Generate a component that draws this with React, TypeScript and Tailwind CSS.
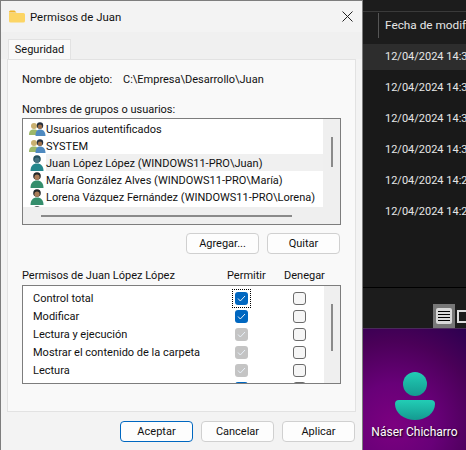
const font = { fontFamily: 'Roboto, "Liberation Sans", sans-serif' };

const users = [
  { name: 'Usuarios autentificados', group: true },
  { name: 'SYSTEM', group: true },
  { name: 'Juan López López (WINDOWS11-PRO\\Juan)', selected: true },
  { name: 'María González Alves (WINDOWS11-PRO\\María)' },
  { name: 'Lorena Vázquez Fernández (WINDOWS11-PRO\\Lorena)' },
  { name: '' },
];

const permissions = [
  { name: 'Control total', state: 'on', focus: true },
  { name: 'Modificar', state: 'on' },
  { name: 'Lectura y ejecución', state: 'off' },
  { name: 'Mostrar el contenido de la carpeta', state: 'off' },
  { name: 'Lectura', state: 'off' },
  { name: '', state: 'on' },
];

const dates = ['14:3', '14:3', '14:3', '14:3', '14:2', '14:2'];

function FolderIcon() {
  return (
    <svg width="16" height="13" viewBox="0 0 16 13">
      <path d="M0 2a1.500 1.500 0 0 1 1.500-1.500h4L7.500 2.500H0z" fill="#f0b429" />
      <path d="M0 3h14.500a1.500 1.500 0 0 1 1.500 1.500V11a1.500 1.500 0 0 1-1.500 1.500h-13A1.500 1.500 0 0 1 0 11z" fill="#fcd565" />
    </svg>
  );
}

function GroupIcon() {
  return (
    <svg width="17" height="14" viewBox="0 0 17 14">
      <circle cx="5" cy="4" r="3" fill="#c9b070" />
      <path d="M0 13c0-4 1.500-5.500 5-5.500s4.500 1.500 4.500 5.500z" fill="#9db86a" />
      <circle cx="11" cy="3.500" r="3.200" fill="#26303e" />
      <circle cx="11" cy="4.700" r="2.200" fill="#9c6f4a" />
      <path d="M6.500 14c0-4.500 1.500-6.500 4.500-6.500s5.500 2 5.500 6.500z" fill="#4f8ac0" />
    </svg>
  );
}

function UserIcon({ dim }: { dim?: boolean }) {
  return (
    <svg width="14" height="16" viewBox="0 0 14 16">
      <circle cx="7" cy="4" r="3.800" fill={dim ? '#24505c' : '#23282a'} />
      <circle cx="7" cy="5.200" r="2.600" fill={dim ? '#44727f' : '#a97c58'} />
      <path d="M.5 16c0-5 2.500-7.500 6.500-7.500s6.500 2.500 6.500 7.500z" fill={dim ? '#24878c' : '#358e6c'} />
    </svg>
  );
}

function Check({ state }: { state: string }) {
  if (state === 'none') {
    return <span className="block h-[13px] w-[13px] rounded-[3px] border-[1.5px] border-[#6b6b6b] bg-[#f6f6f6]" />;
  }
  return (
    <span className={`flex h-[13px] w-[13px] items-center justify-center rounded-[3px] ${state === 'on' ? 'bg-[#0067c0]' : 'bg-[#c4c4c4]'}`}>
      <svg width="9" height="7" viewBox="0 0 9 7" fill="none" stroke="#e8f0f8" strokeWidth="1">
        <path d="M1 3.500 3.300 6 8 1" />
      </svg>
    </span>
  );
}

function Button({ label, primary }: { label: string; primary?: boolean }) {
  return (
    <button className={`h-[21px] w-[73px] rounded-[4px] border bg-[#fdfdfd] text-[11px] leading-none text-[#111] ${primary ? 'border-[#0067c0]' : 'border-[#d0d0d0]'}`}>
      {label}
    </button>
  );
}

export default function App() {
  return (
    <div className="flex h-[450px] w-[466px] overflow-hidden bg-[#1c1c1c]" style={font}>
      {/* Dialog */}
      <div className="flex h-[450px] w-[363px] shrink-0 flex-col border-x border-t border-[#7d7d7d] bg-[#f3f3f3] text-[11px] text-[#111]">
        <div className="flex h-[31px] shrink-0 items-center pl-[8px] pr-[9px]">
          <FolderIcon />
          <span className="ml-[5px] mt-[2px] text-[11.400px]">Permisos de Juan</span>
          <svg className="ml-auto" width="11" height="11" viewBox="0 0 11 11" stroke="#222" strokeWidth="1">
            <path d="M.5.500l10 10M10.500.500l-10 10" />
          </svg>
        </div>

        <div className="flex h-[27px] shrink-0 items-end bg-[#f0f0f0] pl-[7px]">
          <div className="mb-[-1px] flex h-[21px] w-[63px] items-center justify-center border border-b-0 border-[#e2e2e2] bg-[#f9f9f9] pt-[1px]">
            Seguridad
          </div>
        </div>

        <div className="mx-[6px] flex h-[353px] shrink-0 flex-col border border-[#e2e2e2] bg-[#f9f9f9] pl-[14px] pr-[12px]">
          <div className="mt-[12px] flex h-[17px] items-center">
            <span className="w-[101px]">Nombre de objeto:</span>
            <span>C:\Empresa\Desarrollo\Juan</span>
          </div>
          <div className="mt-[14px] flex h-[15px] items-center">Nombres de grupos o usuarios:</div>

          {/* Users list */}
          <div className="flex h-[107px] w-[319px] shrink-0 flex-col overflow-hidden border border-[#7d7d7d] bg-white">
            <div className="flex min-h-0 flex-1">
              <div className="min-w-0 flex-1 overflow-hidden pl-[5px] pt-[1px]">
                {users.map((u, i) => (
                  <div key={i} className="flex h-[17px] items-center">
                    <span className="flex w-[18px] shrink-0 justify-center">{u.group ? <GroupIcon /> : <UserIcon dim={u.selected} />}</span>
                    <span className={`flex h-[17px] flex-1 items-center whitespace-nowrap pt-[3px] ${u.selected ? 'bg-[#f0f0f0]' : ''}`}>{u.name}</span>
                  </div>
                ))}
              </div>
              <div className="flex w-[17px] shrink-0 justify-center bg-[#efefef] pt-[18px]">
                <div className="h-[30px] w-[2px] bg-[#8a8a8a]" />
              </div>
            </div>
            <div className="h-[17px] shrink-0 bg-[#efefef] pl-[18px] pt-[8px]">
              <div className="h-[2px] w-[251px] bg-[#8a8a8a]" />
            </div>
          </div>

          <div className="mt-[8px] flex justify-end gap-[8px] pr-[3px]">
            <Button label="Agregar..." />
            <Button label="Quitar" />
          </div>

          <div className="mt-[14px] flex h-[16px] items-center">
            <span className="w-[205px]">Permisos de Juan López López</span>
            <span className="w-[57px]">Permitir</span>
            <span>Denegar</span>
          </div>

          {/* Permissions list */}
          <div className="mt-[1px] flex h-[99px] w-[319px] shrink-0 overflow-hidden border border-[#7d7d7d] bg-white">
            <div className="min-w-0 flex-1 overflow-hidden pt-[3px]">
              {permissions.map((p, i) => (
                <div key={i} className="flex h-[18px] shrink-0 items-center">
                  <span className="w-[210px] pl-[10px] pt-[2px] whitespace-nowrap">{p.name}</span>
                  <span className={`flex h-[17px] w-[17px] items-center justify-center ${p.focus ? 'outline-1 outline-dotted outline-black' : ''}`}>
                    <Check state={p.state} />
                  </span>
                  <span className="ml-[43px]">
                    <Check state="none" />
                  </span>
                </div>
              ))}
            </div>
            <div className="flex w-[16px] shrink-0 justify-center bg-[#efefef] pt-[18px]">
              <div className="h-[47px] w-[2px] bg-[#8a8a8a]" />
            </div>
          </div>
        </div>

        <div className="flex flex-1 items-start justify-end gap-[8px] pr-[7px] pt-[9px]">
          <Button label="Aceptar" primary />
          <Button label="Cancelar" />
          <Button label="Aplicar" />
        </div>
      </div>

      {/* Explorer behind the dialog */}
      <div className="flex min-w-0 flex-1 flex-col text-[11.800px] text-[#e6e6e6]">
        <div className="h-[12px] shrink-0 border-b border-[#3a3a3a] bg-[#1c1c1c]" />
        <div className="flex h-[32px] shrink-0 items-start bg-[#1c1c1c] pl-[15px]">
          <span className="mt-[1px] flex h-[25px] items-center border-l border-[#555] pl-[6px] whitespace-nowrap">Fecha de modif</span>
        </div>
        <div className="h-[243px] shrink-0 overflow-hidden bg-[#191919]">
          {dates.map((t, i) => (
            <div key={i} className={`mb-[5px] flex h-[26px] items-center pl-[22px] pt-[1px] whitespace-nowrap text-[11px] ${i === 0 ? 'bg-[#2d2d2d]' : ''}`}>
              12/04/2024 {t}
            </div>
          ))}
        </div>
        <div className="h-[17px] shrink-0 border-t border-black bg-[#1c1c1c]" />
        <div className="flex h-[24px] shrink-0 items-stretch justify-end gap-[2px] bg-[#1c1c1c]">
          <span className="flex w-[22px] items-center justify-center bg-[#777]">
            <span className="flex h-[16px] w-[16px] flex-col justify-center gap-[2px] rounded-[2px] bg-[#d8d8d8] px-[2px]">
              <i className="h-[1px] bg-black" />
              <i className="h-[1px] bg-black" />
              <i className="h-[1px] bg-black" />
              <i className="h-[1px] bg-black" />
            </span>
          </span>
          <span className="flex w-[9px] items-center overflow-hidden">
            <span className="h-[13px] w-[14px] shrink-0 border-2 border-[#ddd]" />
          </span>
        </div>
        <div className="flex flex-1 flex-col items-center border-t border-[#4a2a5a] bg-[radial-gradient(circle_at_30%_80%,#7c0080_0%,#680078_35%,#4a0058_70%,#2c0050_100%)] pt-[43px]">
          <svg width="40" height="48" viewBox="0 0 40 48">
            <defs>
              <linearGradient id="teal" x1="0" y1="0" x2="0" y2="1">
                <stop offset="0" stopColor="#22cdb5" />
                <stop offset="1" stopColor="#149a90" />
              </linearGradient>
            </defs>
            <circle cx="20" cy="12" r="12" fill="url(#teal)" />
            <path d="M4 28h32a4 4 0 0 1 4 4c0 9-9 16-20 16S0 41 0 32a4 4 0 0 1 4-4z" fill="url(#teal)" />
          </svg>
          <span className="mt-[3px] whitespace-nowrap text-[12px] text-white [text-shadow:1px_1px_2px_#000]">Náser Chicharro</span>
        </div>
      </div>
    </div>
  );
}
